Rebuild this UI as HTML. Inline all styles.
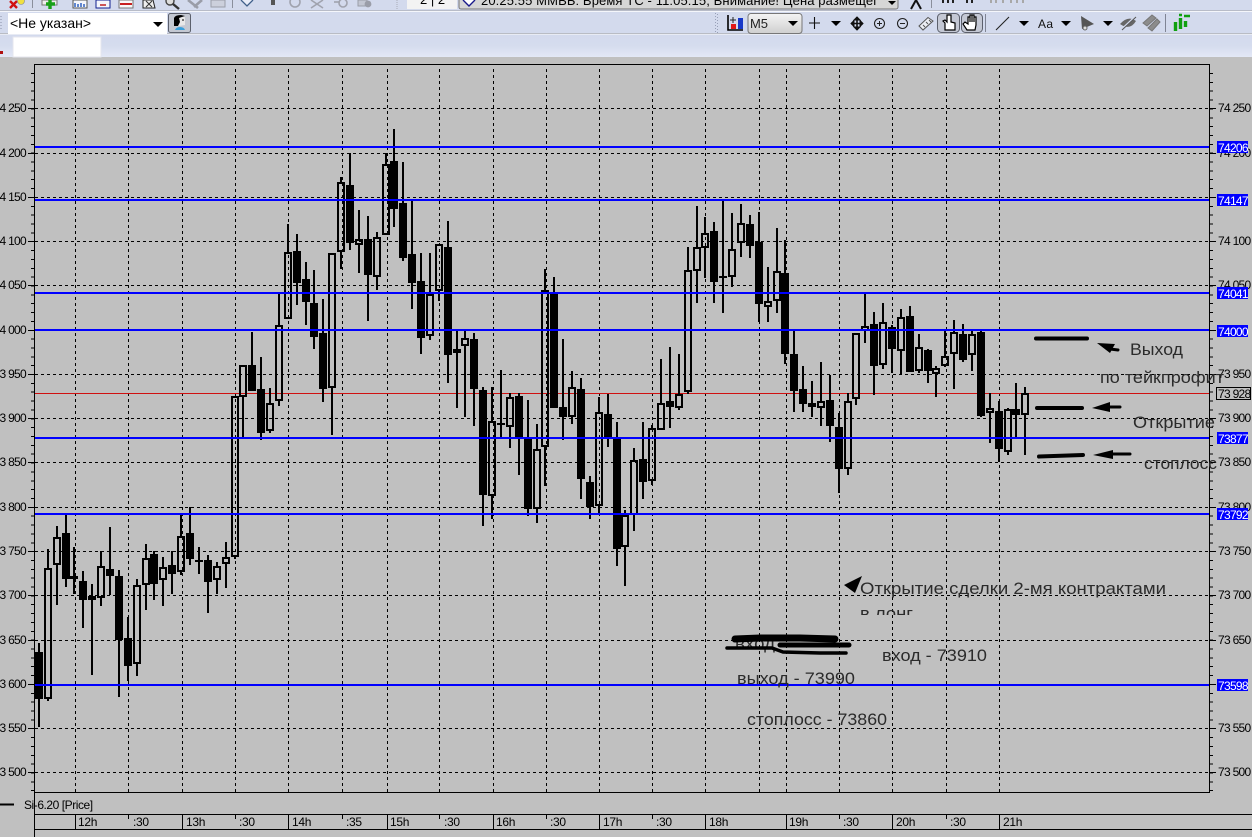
<!DOCTYPE html>
<html><head><meta charset="utf-8"><title>Si-6.20</title>
<style>
html,body{margin:0;padding:0;background:#c0c0c0;width:1252px;height:837px;overflow:hidden}
svg{display:block}
text{font-family:"Liberation Sans",sans-serif}
.ax text,text.ax{font-size:12px;letter-spacing:-.7px;fill:#000}
.lb text{font-size:12px;letter-spacing:-.7px;fill:#fff}
.tm text{font-size:12px;letter-spacing:-.3px;fill:#000}
.ov text{font-size:17px;fill:#2b2b2b}
</style></head><body>
<svg width="1252" height="837" viewBox="0 0 1252 837" xmlns="http://www.w3.org/2000/svg">
<defs>
<linearGradient id="g3" x1="0" y1="0" x2="0" y2="1"><stop offset="0" stop-color="#d3daed"/><stop offset=".5" stop-color="#d5dcee"/><stop offset="1" stop-color="#e3e8f6"/></linearGradient>
<linearGradient id="gb" x1="0" y1="0" x2="0" y2="1"><stop offset="0" stop-color="#f4f4f4"/><stop offset="1" stop-color="#cfcfcf"/></linearGradient>
<clipPath id="cl"><rect x="850" y="600" width="120" height="15"/></clipPath>
</defs>
<rect width="1252" height="837" fill="#c0c0c0"/>

<!-- toolbars -->
<rect x="0" y="0" width="1252" height="10" fill="#d3daed"/>
<rect x="0" y="10" width="1252" height="1" fill="#b8bcc8"/>
<rect x="0" y="11" width="1252" height="1" fill="#f4f6fb"/>
<rect x="0" y="12" width="1252" height="22" fill="#d3daed"/>
<rect x="0" y="33" width="1252" height="1" fill="#b9bcc4"/>
<rect x="0" y="34" width="1252" height="1" fill="#e8ebf4"/>
<rect x="0" y="35" width="1252" height="22" fill="url(#g3)"/>

<!-- row 1 icons (clipped at top) -->
<path d="M10 1L17 8M17 1L10 8" stroke="#d01010" stroke-width="2.4"/>
<circle cx="21" cy="1" r="3.5" fill="#f0e040" stroke="#888" stroke-width=".6"/>
<path d="M32.5 0V8" stroke="#8a8f9c"/>
<rect x="42" y="0" width="15" height="5" fill="#eee" stroke="#777"/>
<path d="M50 0V9M46 4H55" stroke="#18a018" stroke-width="3.4"/>
<rect x="73" y="0" width="14" height="8" fill="#f4f6fb" stroke="#555"/>
<path d="M75 7V3M78 7V4M81 7V3M84 7V4" stroke="#3060c0" stroke-width="1.5"/>
<rect x="96" y="0" width="14" height="8" fill="#f4f6fb" stroke="#102090"/>
<path d="M100 5H106" stroke="#c02020" stroke-width="1.5"/>
<rect x="119" y="0" width="14" height="8" fill="#f8f8f8" stroke="#777"/>
<path d="M120 4H132" stroke="#c82020" stroke-width="2"/>
<path d="M143 0L153 0L155 8H143Z" fill="#eee" stroke="#222"/>
<path d="M146 1L152 7M152 1L146 7" stroke="#333"/>
<circle cx="170" cy="1" r="4" fill="#ddd" stroke="#444" stroke-width="1.4"/>
<path d="M173 4L179 9" stroke="#333" stroke-width="2.4"/>
<path d="M188 0L198 8M202 0L194 7" stroke="#9a9da8" stroke-width="2.6"/>
<rect x="211" y="0" width="14" height="7" fill="#ccd0dc" stroke="#9a9da8"/>
<path d="M232.5 0V8" stroke="#8a8f9c"/>
<path d="M241 0L247 6L253 0" fill="#e8ecf8" stroke="#40608a" stroke-width="1.3"/>
<rect x="271" y="0" width="4" height="5" fill="#555"/>
<circle cx="295" cy="2" r="5" fill="none" stroke="#a0a3ae" stroke-width="1.6"/>
<path d="M311 0L323 8M323 0L311 8" stroke="#a0a3ae" stroke-width="1.6"/>
<circle cx="343" cy="3" r="4" fill="none" stroke="#a0a3ae" stroke-width="1.6"/>
<path d="M334 2H340" stroke="#a0a3ae" stroke-width="1.6"/>
<rect x="358" y="0" width="9" height="6" fill="#c2c6d2" stroke="#9a9da8"/>
<circle cx="368" cy="4" r="3.4" fill="#9a9da8"/>
<path d="M397 0V10" stroke="#a8acb8" stroke-dasharray="1 1"/>
<rect x="407" y="0" width="50" height="9" fill="#f3f3f3"/>
<text x="420" y="4" font-size="13" fill="#000">2 | 2</text>
<rect x="459" y="-4" width="439" height="13" rx="2" fill="#d6d6d6" stroke="#777"/>
<path d="M463 0L469 6L475 0" fill="#fff" stroke="#18188a" stroke-width="1.4"/>
<text x="481" y="5" font-size="13" fill="#000" textLength="397">20:25:55  ММВБ: Время ТС - 11:05:15, Внимание! Цена размещег</text>
<path d="M888 1H896L892 5Z" fill="#000"/>
<path d="M911 9L916 0L921 9" fill="none" stroke="#111" stroke-width="2"/>
<path d="M931.5 0V8" stroke="#8a8f9c"/>
<path d="M943 0V3M948 0V3M953 0V3M967 0V3M972 0V3" stroke="#222" stroke-width="2"/>
<path d="M991 0V3M996 0V3M1003 0V3M1011 0V3M1017 0V3M1023 0V3" stroke="#a8a8a8" stroke-width="2"/>

<!-- row 2 left -->
<path d="M1 16V31" stroke="#8890a8" stroke-dasharray="1 2"/>
<rect x="8" y="13" width="159" height="21" fill="#fff"/>
<text x="10" y="28" font-size="14" fill="#000" textLength="81">&lt;Не указан&gt;</text>
<path d="M153 22H163L158 27Z" fill="#000"/>
<rect x="168.500" y="13.500" width="22" height="19" rx="2" fill="#c4c8d2" stroke="#5c606c"/>
<path d="M175 30Q176 27 180 27Q184 27 185 30Z" fill="#3aa0dc"/>
<path d="M175 26V18Q176 16 181 16Q185 16 185 18L185 25L179 26Z" fill="#e8e8e8"/>
<path d="M174 26V18Q175 15 181 15L185 16L179 18L180 22L178 26Z" fill="#000"/>
<path d="M182 20H184" stroke="#000"/>
<!-- row 3 left -->
<rect x="0" y="51" width="3" height="3" fill="#b01010"/>
<rect x="13" y="37" width="88" height="20" fill="#fff" stroke="#e4e6ee"/>

<!-- row 2 right -->
<path d="M715.500 13V33M717.500 14V33" stroke="#98a0b8" stroke-dasharray="1 2"/>
<path d="M728 15V30H743" fill="none" stroke="#000" stroke-width="1.6"/>
<rect x="731" y="24" width="5" height="5" fill="#e01818"/>
<rect x="738" y="18" width="5" height="11" fill="#1838c8"/>
<path d="M733 17V23M730 20H736" stroke="#222"/>
<rect x="748" y="13.500" width="54" height="20" rx="3" fill="url(#gb)" stroke="#777"/>
<text x="750" y="28" font-size="13" fill="#222" textLength="18">M5</text>
<path d="M788 21H798L793 26Z" fill="#000"/>
<path d="M809 23H820M814.500 17V29" stroke="#111" stroke-width="1.1"/>
<path d="M831 21H841L836 26Z" fill="#000"/>
<path d="M851 23.500H863M857 17V30" stroke="#111" stroke-width="1.6"/>
<path d="M851 23.500L854 20.500V26.500ZM863 23.500L860 20.500V26.500ZM857 17L854 20H860ZM857 30L854 27H860Z" fill="#111" stroke="#111"/>
<circle cx="879.500" cy="23.500" r="5" fill="none" stroke="#222" stroke-width="1.1"/>
<path d="M877 23.500H882M879.500 21V26" stroke="#222"/>
<circle cx="902.500" cy="23.500" r="5" fill="none" stroke="#222" stroke-width="1.1"/>
<path d="M900 23.500H905" stroke="#222"/>
<path d="M919 26L928 17.500L933 21L923 30Z" fill="#eceef4" stroke="#555"/>
<path d="M923 25L925 27M926 22L928 24M929 20L931 22" stroke="#555"/>
<rect x="937.500" y="13.500" width="22" height="19" rx="4" fill="#c4c8d4" stroke="#5c606c"/>
<path d="M945 30V23L943 21L945 20L947 22V15H951V22L955 23V30Z" fill="#fff" stroke="#000" stroke-width="1.2"/>
<rect x="961.500" y="13.500" width="21" height="19" rx="4" fill="#c4c8d4" stroke="#5c606c"/>
<path d="M967 30L963 24L965 22L968 24V17H970V22V15H972V22V15H974V22V17H976V25L975 30Z" fill="#fff" stroke="#000" stroke-width="1.2"/>
<path d="M985.500 14V32" stroke="#7f8494"/>
<path d="M996 30L1009 17" stroke="#222" stroke-width="1.1"/>
<path d="M1019 21H1029L1024 26Z" fill="#000"/>
<text x="1038" y="28" font-size="12" fill="#111" textLength="15">Aa</text>
<path d="M1061 21H1071L1066 26Z" fill="#000"/>
<path d="M1081 16L1094 24L1082 29Z" fill="#555"/>
<circle cx="1085" cy="28" r="2" fill="#ddd" stroke="#666"/>
<path d="M1103 21H1113L1108 26Z" fill="#000"/>
<path d="M1120 24Q1128 15 1136 21Q1130 31 1120 24Z" fill="#666"/>
<path d="M1121 30L1135 17" stroke="#d3daed" stroke-width="2"/>
<path d="M1122 30L1136 17" stroke="#555"/>
<path d="M1143 23L1152 15L1156 18L1147 26ZM1148 28L1157 19L1160 22L1152 31Z" fill="#8c8c8c" stroke="#777"/>
<path d="M1165.500 14V32" stroke="#7f8494"/>
<path d="M1175.500 31V22M1180.500 29V18M1185.500 27V21" stroke="#10a010" stroke-width="3.4"/>
<path d="M1184 16H1190M1179 15H1182" stroke="#10a010" stroke-width="2.4"/>

<!-- plot frame -->
<g shape-rendering="crispEdges">
<path d="M34.500 64V837M34 64.500H1209.500M1209.500 64V792M34 792.500H1210" stroke="#000" fill="none"/>
<path d="M32.500 73V792" stroke="#000" stroke-width="3" stroke-dasharray="1 7.854" fill="none"/>
<path d="M1211.500 73V792" stroke="#000" stroke-width="3" stroke-dasharray="1 7.854" fill="none"/>
<path d="M28 108.500H34M28 153.500H34M28 197.500H34M28 241.500H34M28 285.500H34M28 330.500H34M28 374.500H34M28 418.500H34M28 462.500H34M28 507.500H34M28 551.500H34M28 595.500H34M28 640.500H34M28 684.500H34M28 728.500H34M28 772.500H34M1210 108.500H1216M1210 153.500H1216M1210 197.500H1216M1210 241.500H1216M1210 285.500H1216M1210 330.500H1216M1210 374.500H1216M1210 418.500H1216M1210 462.500H1216M1210 507.500H1216M1210 551.500H1216M1210 595.500H1216M1210 640.500H1216M1210 684.500H1216M1210 728.500H1216M1210 772.500H1216" stroke="#000"/>
<!-- dashed grid -->
<path d="M35 108.500H1209M35 153.500H1209M35 197.500H1209M35 241.500H1209M35 285.500H1209M35 330.500H1209M35 374.500H1209M35 418.500H1209M35 462.500H1209M35 507.500H1209M35 551.500H1209M35 595.500H1209M35 640.500H1209M35 684.500H1209M35 728.500H1209M35 772.500H1209" stroke="#000" stroke-dasharray="3 3" fill="none"/>
<path d="M75.500 69V792M128.500 69V792M182.500 69V792M235.500 69V792M288.500 69V792M342.500 69V792M387.500 69V792M439.500 69V792M493.500 69V792M546.500 69V792M599.500 69V792M652.500 69V792M705.500 69V792M759.500 69V792M786.500 69V792M839.500 69V792M892.500 69V792M946.500 69V792M999.500 69V792" stroke="#000" stroke-dasharray="3 3" fill="none"/>
<!-- red price line -->
<path d="M35 393.500H1209" stroke="#d01010"/>

<!-- wicks -->
<path stroke="#000" stroke-width="2" fill="none" d="M39 643V727M48 549V568M48 699V701M57 526V537M57 565V605M66 515V587M74 547V594M83 571V628M92 584V596M92 600V675M101 551V566M101 598V606M110 527V595M119 570V697M128 617V681M137 579V585M137 664V676M146 544V558M146 585V610M154 551V600M163 557V567M163 580V606M172 551V594M181 514V536M181 572V575M190 507V565M199 547V574M208 555V613M217 562V566M217 580V594M226 542V557M226 564V588M235 557V559M243 397V437M252 332V391M261 357V440M270 388V403M270 431V433M279 293V325M279 401V406M288 224V252M297 234V305M306 262V325M314 270V349M323 299V402M332 388V435M341 177V182M341 252V269M350 153V250M359 210V239M359 245V273M368 216V321M377 232V237M377 277V290M386 153V164M394 129V227M403 162V261M412 199V309M421 253V354M430 253V294M430 336V340M439 291V301M448 221V383M457 331V349M457 353V408M465 330V338M465 346V417M474 333V426M483 387V526M492 387V421M492 496V519M501 370V437M510 393V397M510 427V448M519 393V475M528 400V516M537 424V449M537 509V523M545 269V290M545 447V486M554 277V408M563 339V440M572 371V387M572 417V424M581 378V499M590 476V519M599 397V412M599 506V515M608 394V447M617 422V566M625 510V515M625 547V586M634 448V460M634 515V531M643 422V499M652 425V428M652 481V485M661 359V403M670 347V428M679 354V394M679 408V410M688 247V270M688 392V394M697 206V247M697 271V303M705 217V233M705 248V278M714 222V303M723 201V313M732 213V249M732 277V287M741 204V223M741 243V257M750 215V258M759 212V322M768 267V301M768 307V322M777 228V271M777 301V313M785 240V364M794 331V412M803 366V412M812 381V417M821 362V401M821 408V426M830 375V442M839 413V493M848 393V401M848 469V475M856 399V405M865 294V326M865 331V343M874 312V395M883 303V322M883 365V369M892 325V373M901 309V317M901 351V375M910 306V372M919 334V347M919 371V373M928 349V383M936 366V368M936 374V397M945 330V356M945 366V367M954 320V332M954 354V389M963 324V362M972 330V334M972 355V371M981 330V417M990 393V408M990 413V443M999 401V462M1008 408V409M1008 452V455M1016 383V438M1025 387V393M1025 415V455"/>
<!-- solid bodies -->
<path fill="#000" d="M35 652h8v47h-8zM62 533h8v46h-8zM70 576h8v3h-8zM79 581h8v19h-8zM106 569h8v7h-8zM115 576h8v64h-8zM124 638h8v28h-8zM150 554h8v30h-8zM168 565h8v9h-8zM186 533h8v26h-8zM195 560h8v2h-8zM204 560h8v22h-8zM248 365h8v26h-8zM257 389h8v44h-8zM293 251h8v32h-8zM302 279h8v23h-8zM310 303h8v34h-8zM319 333h8v56h-8zM346 185h8v58h-8zM364 239h8v36h-8zM390 161h8v48h-8zM399 203h8v55h-8zM408 254h8v29h-8zM417 281h8v57h-8zM444 247h8v108h-8zM470 339h8v50h-8zM479 390h8v105h-8zM497 423h8v2h-8zM515 396h8v43h-8zM524 439h8v70h-8zM550 293h8v115h-8zM559 407h8v10h-8zM577 389h8v90h-8zM586 482h8v25h-8zM604 414h8v25h-8zM613 438h8v111h-8zM639 459h8v23h-8zM666 401h8v6h-8zM710 231h8v51h-8zM719 276h8v2h-8zM746 224h8v22h-8zM755 242h8v62h-8zM781 273h8v81h-8zM790 354h8v37h-8zM799 389h8v15h-8zM808 403h8v4h-8zM826 400h8v26h-8zM835 427h8v42h-8zM870 324h8v42h-8zM888 327h8v22h-8zM906 316h8v56h-8zM924 350h8v21h-8zM959 334h8v26h-8zM977 332h8v84h-8zM995 411h8v38h-8zM1012 409h8v6h-8z"/>
<!-- hollow bodies -->
<path fill="none" stroke="#000" stroke-width="2" d="M45 569h6v129h-6zM54 538h6v26h-6zM89 597h6v2h-6zM98 567h6v30h-6zM134 586h6v77h-6zM143 559h6v25h-6zM160 568h6v11h-6zM178 537h6v34h-6zM214 567h6v12h-6zM223 558h6v5h-6zM232 397h6v159h-6zM240 366h6v30h-6zM267 404h6v26h-6zM276 326h6v74h-6zM285 253h6v65h-6zM329 254h6v133h-6zM338 183h6v68h-6zM356 240h6v4h-6zM374 238h6v38h-6zM383 165h6v69h-6zM427 295h6v40h-6zM436 245h6v45h-6zM454 350h6v2h-6zM462 339h6v6h-6zM489 422h6v73h-6zM507 398h6v28h-6zM534 450h6v58h-6zM542 291h6v155h-6zM569 388h6v28h-6zM596 413h6v92h-6zM622 516h6v30h-6zM631 461h6v53h-6zM649 429h6v51h-6zM658 404h6v25h-6zM676 395h6v12h-6zM685 271h6v120h-6zM694 248h6v22h-6zM702 234h6v13h-6zM729 250h6v26h-6zM738 224h6v18h-6zM765 302h6v4h-6zM774 272h6v28h-6zM818 402h6v5h-6zM845 402h6v66h-6zM853 334h6v64h-6zM862 327h6v3h-6zM880 323h6v41h-6zM898 318h6v32h-6zM916 348h6v22h-6zM933 369h6v4h-6zM942 357h6v8h-6zM951 333h6v20h-6zM969 335h6v19h-6zM987 409h6v3h-6zM1005 410h6v41h-6zM1022 394h6v20h-6z"/>
<!-- blue levels -->
<path stroke="#0000ff" stroke-width="2" d="M35 147H1209M35 200H1209M35 293H1209M35 330H1209M35 438H1209M35 514H1209M35 685H1209"/>
<!-- time axis -->
<path d="M34 814.500H1252M35 829.500H1252M75.500 814V829M182.500 814V829M288.500 814V829M387.500 814V829M493.500 814V829M599.500 814V829M705.500 814V829M786.500 814V829M892.500 814V829M999.500 814V829M128.500 814V819M235.500 814V819M342.500 814V819M439.500 814V819M546.500 814V819M652.500 814V819M839.500 814V819M946.500 814V819" stroke="#000" fill="none"/>
<path d="M0 804.500H14" stroke="#000" stroke-width="2"/>
</g>

<!-- left axis labels -->
<g class="ax" text-anchor="end">
<text x="26" y="112">74 250</text><text x="26" y="157">74 200</text><text x="26" y="201">74 150</text><text x="26" y="245">74 100</text><text x="26" y="289">74 050</text><text x="26" y="334">74 000</text><text x="26" y="378">73 950</text><text x="26" y="422">73 900</text><text x="26" y="466">73 850</text><text x="26" y="511">73 800</text><text x="26" y="555">73 750</text><text x="26" y="599">73 700</text><text x="26" y="644">73 650</text><text x="26" y="688">73 600</text><text x="26" y="732">73 550</text><text x="26" y="776">73 500</text>
</g>
<!-- right axis labels -->
<g class="ax">
<text x="1218" y="112">74 250</text><text x="1218" y="157">74 200</text><text x="1218" y="245">74 100</text><text x="1218" y="289">74 050</text><text x="1218" y="378">73 950</text><text x="1218" y="422">73 900</text><text x="1218" y="466">73 850</text><text x="1218" y="511">73 800</text><text x="1218" y="555">73 750</text><text x="1218" y="599">73 700</text><text x="1218" y="644">73 650</text><text x="1218" y="732">73 550</text><text x="1218" y="776">73 500</text>
</g>
<!-- blue labels -->
<g fill="#0000ff" shape-rendering="crispEdges">
<rect x="1217" y="141" width="31" height="12"/><rect x="1217" y="194" width="31" height="12"/><rect x="1217" y="287" width="31" height="12"/><rect x="1217" y="325" width="31" height="12"/><rect x="1217" y="432" width="31" height="12"/><rect x="1217" y="508" width="31" height="12"/><rect x="1217" y="679" width="31" height="12"/>
</g>
<g class="lb">
<text x="1218" y="152">74206</text><text x="1218" y="205">74147</text><text x="1218" y="298">74041</text><text x="1218" y="336">74000</text><text x="1218" y="443">73877</text><text x="1218" y="519">73792</text><text x="1218" y="690">73598</text>
</g>
<rect x="1216.500" y="387.500" width="34" height="12" fill="#c0c0c0" stroke="#000" shape-rendering="crispEdges"/>
<text class="ax" x="1218" y="398">73 928</text>

<!-- legend and time labels -->
<text class="ax" x="24" y="809" style="letter-spacing:-.45px">Si-6.20 [Price]</text>
<g class="tm">
<text x="78" y="826">12h</text><text x="133" y="826">:30</text><text x="186" y="826">13h</text><text x="239" y="826">:30</text><text x="292" y="826">14h</text><text x="346" y="826">:35</text><text x="390" y="826">15h</text><text x="444" y="826">:30</text><text x="496" y="826">16h</text><text x="550" y="826">:30</text><text x="603" y="826">17h</text><text x="656" y="826">:30</text><text x="709" y="826">18h</text><text x="789" y="826">19h</text><text x="843" y="826">:30</text><text x="896" y="826">20h</text><text x="950" y="826">:30</text><text x="1003" y="826">21h</text>
</g>

<!-- overlay annotation text -->
<g class="ov">
<text x="1130" y="355" textLength="53" lengthAdjust="spacingAndGlyphs">Выход</text>
<text x="1100" y="383" textLength="124" lengthAdjust="spacingAndGlyphs">по тейкпрофит</text>
<text x="1133" y="428" textLength="82" lengthAdjust="spacingAndGlyphs">Открытие</text>
<text x="1144" y="469" textLength="73" lengthAdjust="spacingAndGlyphs">стоплосс</text>
<text x="860" y="594" textLength="306" lengthAdjust="spacingAndGlyphs">Открытие сделки 2-мя контрактами</text>
<text x="860" y="619" textLength="53" lengthAdjust="spacingAndGlyphs" clip-path="url(#cl)">в лонг</text>
<text x="735" y="649" textLength="40" lengthAdjust="spacingAndGlyphs">вход</text>
<text x="882" y="661" textLength="105" lengthAdjust="spacingAndGlyphs">вход - 73910</text>
<text x="737" y="684" textLength="118" lengthAdjust="spacingAndGlyphs">выход - 73990</text>
<text x="747" y="725" textLength="140" lengthAdjust="spacingAndGlyphs">стоплосс - 73860</text>
</g>

<!-- hand drawn marks -->
<g fill="none" stroke="#000" stroke-linecap="round" stroke-linejoin="round">
<path d="M1036 338.500H1087" stroke-width="4"/>
<path d="M1037 408H1082" stroke-width="4"/>
<path d="M1039 456.500L1083 455" stroke-width="4"/>
<path d="M1110 349L1118 350" stroke-width="3"/>
<path d="M1108 407L1120 407" stroke-width="3"/>
<path d="M1110 454L1130 454" stroke-width="3"/>
<path d="M735 639L760 638L800 638L835 639" stroke-width="7"/>
<path d="M780 645H849" stroke-width="5"/>
<path d="M727 648L772 648L783 652L820 653L846 653" stroke-width="3.500"/>
</g>
<g fill="#000">
<path d="M1097 343L1115 344L1110 353Z"/>
<path d="M1092 408L1110 402L1110 412Z"/>
<path d="M1093 455L1113 450L1113 459Z"/>
<path d="M844 585L862 576L855 593Z"/>
</g>
</svg>
</body></html>
